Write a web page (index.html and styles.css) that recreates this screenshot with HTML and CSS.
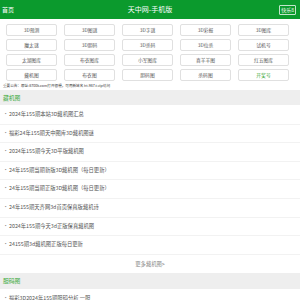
FILE: index.html
```html
<!DOCTYPE html>
<html lang="zh-CN">
<head>
<meta charset="utf-8">
<title>天中网-手机版</title>
<link rel="stylesheet" href="styles.css">
</head>
<body>
<header class="top">
  <a class="top-home">首页</a>
  <h1 class="top-title">天中网-手机版</h1>
  <div class="top-right"><a class="top-btn">快乐8</a></div>
</header>
<nav class="grid">
  <a class="cell">3D预测</a><a class="cell">3D图谜</a><a class="cell">3D字谜</a><a class="cell">3D彩报</a><a class="cell">3D图库</a>
  <a class="cell">魔太谜</a><a class="cell">3D胆码</a><a class="cell">3D杀码</a><a class="cell">3D位杀</a><a class="cell">试机号</a>
  <a class="cell">太湖图库</a><a class="cell">布衣图库</a><a class="cell">小军图库</a><a class="cell">喜羊羊图</a><a class="cell">红五图库</a>
  <a class="cell">藏机图</a><a class="cell">布衣图</a><a class="cell">胆码图</a><a class="cell">杀码图</a><a class="cell cell-green">开奖号</a>
</nav>
<p class="notice">重要公告：原址:8700k.com打开很慢，可用新域名 ht.987.t.vip访问</p>
<section>
  <h2 class="sec-head">藏机图</h2>
  <ul class="list">
    <li>2024年155期本站3D藏机图汇总</li>
    <li>福彩24年155期天中图库3D藏机图谜</li>
    <li>2024年155期今天3D平版藏机图</li>
    <li>24年155期当期新版3D藏机图（每日更新）</li>
    <li>24年155期当期正版3D藏机图（每日更新）</li>
    <li>24年155期天齐网3d首页保真版藏机诗</li>
    <li>2024年155期今天3d正版保真藏机图</li>
    <li>24155期3d藏机图正版每日更新</li>
  </ul>
  <a class="more">更多藏机图&gt;</a>
</section>
<section>
  <h2 class="sec-head sec-head2">胆码图</h2>
  <ul class="list">
    <li>福彩3D2024年155期胆码分析 一胆</li>
  </ul>
</section>
</body>
</html>
```
FILE: styles.css
```css
html, body {
  margin: 0;
  padding: 0;
  background: #fff;
}
body {
  font-family: "Noto Sans CJK SC", "Liberation Sans", sans-serif;
  color: #555;
}
.top {
  height: 19px;
  background: #0b9a2d;
  color: #fff;
  display: grid;
  grid-template-columns: 1fr auto 1fr;
  align-items: center;
}
.top-home {
  font-size: 6px;
  padding-left: 2px;
}
.top-title {
  margin: 0;
  font-size: 7px;
  font-weight: normal;
  line-height: 19px;
}
.top-right {
  display: flex;
  justify-content: flex-end;
  padding-right: 4px;
}
.top-btn {
  font-size: 5px;
  line-height: 8px;
  padding: 0 1px;
  border: 1px solid rgba(255,255,255,0.75);
  border-radius: 1px;
}
.grid {
  display: grid;
  grid-template-columns: repeat(5, 51px);
  column-gap: 7px;
  row-gap: 3.5px;
  padding: 5px 0 0 6px;
}
.cell {
  height: 9.5px;
  line-height: 9.5px;
  border: 1px solid #e0e0e0;
  border-radius: 2px;
  text-align: center;
  font-size: 4.8px;
  color: #555;
}
.cell-green {
  color: #3aa83a;
}
.notice {
  margin: 0;
  padding: 2px 3px;
  font-size: 3.6px;
  line-height: 5px;
  color: #333;
}
.sec-head {
  margin: 0;
  height: 15.5px;
  line-height: 15.5px;
  background: #eeeeee;
  color: #3aa83a;
  font-size: 5.8px;
  font-weight: normal;
  padding-left: 3px;
}
.sec-head2 {
  height: 16px;
  line-height: 16px;
}
.list {
  list-style: none;
  margin: 1px 0 0;
  padding: 0;
}
.list li {
  height: 17.6px;
  line-height: 17.6px;
  border-bottom: 1px solid #f2f2f2;
  font-size: 5.3px;
  color: #555;
  padding-left: 3px;
}
.list li::before {
  content: "·";
  display: inline-block;
  width: 6px;
  color: #888;
}
.more {
  display: block;
  height: 18px;
  line-height: 18px;
  text-align: center;
  font-size: 5.3px;
  color: #888;
}
```
